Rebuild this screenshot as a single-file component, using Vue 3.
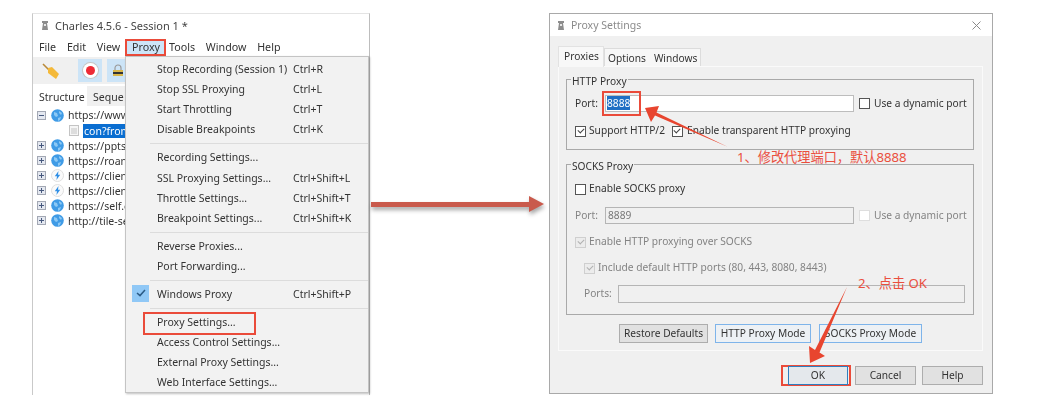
<script setup>
const menuBar = ["File", "Edit", "View", "Proxy", "Tools", "Window", "Help"];

const menuGroups = [
  [
    { label: "Stop Recording (Session 1)", key: "Ctrl+R" },
    { label: "Stop SSL Proxying", key: "Ctrl+L" },
    { label: "Start Throttling", key: "Ctrl+T" },
    { label: "Disable Breakpoints", key: "Ctrl+K" },
  ],
  [
    { label: "Recording Settings..." },
    { label: "SSL Proxying Settings...", key: "Ctrl+Shift+L" },
    { label: "Throttle Settings...", key: "Ctrl+Shift+T" },
    { label: "Breakpoint Settings...", key: "Ctrl+Shift+K" },
  ],
  [{ label: "Reverse Proxies..." }, { label: "Port Forwarding..." }],
  [{ label: "Windows Proxy", key: "Ctrl+Shift+P", checked: true }],
  [
    { label: "Proxy Settings...", marked: true },
    { label: "Access Control Settings..." },
    { label: "External Proxy Settings..." },
    { label: "Web Interface Settings..." },
  ],
];

const hosts = [
  { name: "https://www", icon: "globe", open: true },
  { name: "con?from", icon: "doc", child: true },
  { name: "https://ppts", icon: "globe" },
  { name: "https://roan", icon: "globe" },
  { name: "https://clien", icon: "bolt" },
  { name: "https://clien", icon: "bolt" },
  { name: "https://self.e", icon: "globe" },
  { name: "http://tile-se", icon: "globe" },
];
</script>

<template>
  <main class="page">
    <section class="charles">
      <header class="title">
        <svg class="jar" width="6" height="9" viewBox="0 0 6 9">
          <path d="M0 0h6v2H5l1 7H0l1-7H0z" fill="#8d8d8d" />
          <path d="M2 3h2v2H2z" fill="#e6e6e6" />
        </svg>
        <span>Charles 4.5.6 - Session 1 *</span>
      </header>
      <nav class="menubar">
        <span v-for="m in menuBar" :key="m" class="menubar-item" :class="{ active: m === 'Proxy' }">{{ m }}</span>
      </nav>
      <div class="toolbar">
        <svg class="broom" width="18" height="18" viewBox="0 0 18 18">
          <path d="M1 2l6 6" stroke="#b98a3a" stroke-width="1.6" />
          <path d="M6 6l4-1 7 7-3 5-8-6z" fill="#f4b93a" />
        </svg>
        <span class="tool tool-rec"><i class="rec-dot"></i></span>
        <span class="tool tool-lock">
          <svg width="12" height="13" viewBox="0 0 12 13">
            <path d="M3 6V4a3 3 0 0 1 6 0v2" fill="none" stroke="#9a9a9a" stroke-width="1.2" />
            <rect x="1" y="6" width="10" height="6" fill="#d9b64a" />
            <rect x="1" y="8" width="10" height="2" fill="#333" />
          </svg>
        </span>
      </div>
      <div class="tree">
        <div class="tree-tabs">
          <span class="tree-tab current">Structure</span>
          <span class="tree-tab">Seque</span>
        </div>
        <ul class="hosts">
          <li v-for="(h, i) in hosts" :key="i" class="host" :class="{ child: h.child }">
            <svg v-if="!h.child" class="expander" width="9" height="9" viewBox="0 0 9 9">
              <rect x="0.5" y="0.5" width="8" height="8" fill="#e4e8f0" stroke="#a3a8b4" />
              <path d="M2 4.5h5" stroke="#47597e" />
              <path v-if="!h.open" d="M4.5 2v5" stroke="#47597e" />
            </svg>
            <svg v-if="h.icon === 'globe'" width="13" height="13" viewBox="0 0 13 13">
              <circle cx="6.5" cy="6.5" r="6.3" fill="#3f9be6" />
              <path d="M3 3l3 1 1 3-2 1-2-2zM8 2l3 2-1 2-2-2zM7 9l3-1-1 3-2 1z" fill="#8cc8f4" />
            </svg>
            <svg v-else-if="h.icon === 'bolt'" width="13" height="13" viewBox="0 0 13 13">
              <circle cx="6.5" cy="6.5" r="6" fill="#fafafa" stroke="#dfdfdf" />
              <path d="M7.5 2L3.8 7.2h2.2L5.4 11 9.2 5.8H7z" fill="#2f8fe6" />
            </svg>
            <svg v-else width="10" height="11" viewBox="0 0 10 11">
              <rect x="0.5" y="0.5" width="9" height="10" fill="#f6f6f6" stroke="#c4c4c4" />
              <path d="M2 4h6M2 6h6M2 8h6" stroke="#c4c4c4" />
            </svg>
            <span class="host-name">{{ h.name }}</span>
          </li>
        </ul>
      </div>

      <div class="menu">
        <template v-for="(group, g) in menuGroups" :key="g">
          <div v-if="g" class="sep"></div>
          <div v-for="item in group" :key="item.label" class="item">
            <span v-if="item.checked" class="check">
              <svg width="10" height="8" viewBox="0 0 10 8"><path d="M1 4l3 2.6L9 1" fill="none" stroke="#2b5b86" stroke-width="1.5" /></svg>
            </span>
            <span class="item-label" :class="{ marked: item.marked }">{{ item.label }}</span>
            <span v-if="item.key" class="item-key">{{ item.key }}</span>
          </div>
        </template>
      </div>
    </section>

    <div class="link-arrow">
      <span class="link-line"></span>
      <span class="link-head"></span>
    </div>

    <section class="dialog">
      <header class="dialog-title">
        <svg class="jar" width="6" height="9" viewBox="0 0 6 9">
          <path d="M0 0h6v2H5l1 7H0l1-7H0z" fill="#8d8d8d" />
          <path d="M2 3h2v2H2z" fill="#e6e6e6" />
        </svg>
        <span>Proxy Settings</span>
        <svg class="close" width="9" height="9" viewBox="0 0 9 9"><path d="M.5.5l8 8M8.5.5l-8 8" stroke="#8a8a8a" /></svg>
      </header>
      <div class="dialog-body">
        <div class="tabs">
          <span class="tab current">Proxies</span>
          <span class="tab-rest"><span>Options</span><span>Windows</span></span>
        </div>
        <div class="panel">
          <div class="group">
            <span class="legend">HTTP Proxy</span>
            <div class="row">
              <label class="port-label">Port:</label>
              <div class="input port-input"><span class="selected">8888</span><b class="port-mark"></b></div>
              <i class="box dynamic"></i>
              <span>Use a dynamic port</span>
            </div>
            <div class="row second">
              <i class="box on"></i>
              <span>Support HTTP/2</span>
              <i class="box on next"></i>
              <span>Enable transparent HTTP proxying</span>
            </div>
          </div>

          <div class="group socks">
            <span class="legend">SOCKS Proxy</span>
            <div class="row">
              <i class="box"></i>
              <span>Enable SOCKS proxy</span>
            </div>
            <div class="row off gap">
              <label class="port-label">Port:</label>
              <div class="input disabled">8889</div>
              <i class="box dynamic blank"></i>
              <span>Use a dynamic port</span>
            </div>
            <div class="row off gap">
              <i class="box on faded"></i>
              <span>Enable HTTP proxying over SOCKS</span>
            </div>
            <div class="row off gap indent">
              <i class="box on faded"></i>
              <span>Include default HTTP ports (80, 443, 8080, 8443)</span>
            </div>
            <div class="row off gap indent last">
              <label class="ports-label">Ports:</label>
              <div class="input disabled wide"></div>
            </div>
          </div>

          <div class="modes">
            <button class="btn">Restore Defaults</button>
            <button class="btn blue http">HTTP Proxy Mode</button>
            <button class="btn blue socks-mode">SOCKS Proxy Mode</button>
          </div>
        </div>
        <div class="footer">
          <span class="ok-mark"><button class="btn ok">OK</button></span>
          <button class="btn foot">Cancel</button>
          <button class="btn foot">Help</button>
        </div>
      </div>
    </section>

    <!-- red notes drawn over the screenshots -->
    <svg class="notes" width="1063" height="420" viewBox="0 0 1063 420">
      <polygon points="645,108 659,106 656.5,112.5 728,147 655,115.5 651,122" fill="#e8452f" />
      <polygon points="847,287 819.5,352.5 825,356 810,363 809,346 815,350" fill="#e8452f" />
    </svg>
    <span class="note note-one">1、修改代理端口，默认8888</span>
    <span class="note note-two">2、点击 OK</span>
  </main>
</template>

<style>
html,
body {
  margin: 0;
  background: #fff;
}
</style>

<style scoped>
.page {
  position: relative;
  display: flex;
  align-items: flex-start;
  width: 1063px;
  height: 420px;
  box-sizing: border-box;
  padding: 13px 0 0 32px;
  overflow: hidden;
  font-family: "Noto Sans", "Noto Sans CJK SC", sans-serif;
  font-size: 10.5px;
  color: #333;
}

/* left window */
.charles {
  position: relative;
  flex: none;
  width: 338px;
  height: 382px;
  box-sizing: border-box;
  border-left: 1px solid #c9c9c9;
  border-right: 1px solid #bdbdbd;
  border-top: 1px solid #e4e4e4;
  background: #fff;
  filter: blur(0.45px);
}
.title {
  display: flex;
  align-items: center;
  gap: 7px;
  height: 22px;
  padding-left: 9px;
  font-size: 11px;
  color: #444;
}
.jar {
  flex: none;
}
.menubar {
  display: flex;
  height: 20px;
  margin-top: 1px;
  align-items: center;
  padding-left: 6px;
  font-size: 10.7px;
}
.menubar-item {
  margin-right: 10.8px;
}
.menubar-item.active {
  margin: 0 3px 0 -6px;
  padding: 0 4px 0 5px;
  line-height: 13px;
  border: 2px solid #ea4b3a;
  background: #cde5f8;
}
.toolbar {
  display: flex;
  align-items: center;
  height: 27px;
  background: #f0f0f0;
  padding-left: 9px;
}
.broom {
  margin-right: 18px;
}
.tool {
  display: flex;
  align-items: center;
  justify-content: center;
  height: 23px;
  background: #cce4f7;
}
.tool-rec {
  width: 24px;
  margin-right: 5px;
}
.tool-lock {
  width: 22px;
}
.rec-dot {
  width: 9px;
  height: 9px;
  border-radius: 50%;
  background: #ee2b35;
  box-shadow: 0 0 0 3px #fff, 0 0 0 4px #c6c6c6;
}
.tree {
  height: 310px;
  margin-top: 2px;
  overflow: hidden;
}
.tree-tabs {
  display: flex;
  height: 20px;
  background: #f0f0f0;
}
.tree-tab {
  padding: 4px 3px 0 6px;
}
.tree-tab.current {
  width: 45px;
  background: #fff;
}
.hosts {
  list-style: none;
  margin: 0;
  padding: 1px 0 0 4px;
}
.host {
  display: flex;
  align-items: center;
  gap: 5px;
  height: 15px;
  white-space: nowrap;
}
.host.child {
  padding-left: 32px;
}
.host.child .host-name {
  background: #0a6ed1;
  color: #fff;
  padding: 0 0 0 1px;
}
.host:first-child {
  height: 16px;
}
.host-name {
  margin-left: -1px;
}

.menu {
  position: absolute;
  left: 92px;
  top: 42px;
  width: 244px;
  height: 337px;
  box-sizing: border-box;
  padding-top: 2px;
  background: #f2f2f2;
  border: 1px solid #c4c4c4;
  box-shadow: 1px 1px 2px rgba(0, 0, 0, 0.25);
}
.item {
  position: relative;
  display: flex;
  align-items: center;
  height: 20.1px;
  padding-left: 31px;
  white-space: nowrap;
}
.item-label {
  width: 136px;
}
.marked {
  position: relative;
  z-index: 0;
}
.marked::before {
  content: "";
  position: absolute;
  left: -14px;
  top: -3px;
  width: 113px;
  height: 23px;
  box-sizing: border-box;
  border: 2px solid #ea4b3a;
}
.check {
  position: absolute;
  left: 6px;
  top: 1px;
  display: flex;
  align-items: center;
  justify-content: center;
  width: 17px;
  height: 17px;
  background: #90c8f6;
}
.sep {
  height: 1px;
  margin: 4px 0 3px 24px;
  background: #dcdcdc;
}

/* arrow between the two windows */
.link-arrow {
  flex: none;
  display: flex;
  align-items: center;
  width: 173px;
  height: 16px;
  margin: 183px 5px 0 1px;
  filter: drop-shadow(1px 3px 2px rgba(0, 0, 0, 0.35));
}
.link-line {
  flex: 1;
  height: 5px;
  background: #c95a4c;
}
.link-head {
  width: 0;
  height: 0;
  border-left: 15px solid #c95a4c;
  border-top: 8px solid transparent;
  border-bottom: 8px solid transparent;
}

/* right window */
.dialog {
  flex: none;
  width: 444px;
  height: 381px;
  box-sizing: border-box;
  border: 1px solid #a9a9a9;
  background: #f0f0f0;
  font-size: 10.2px;
  filter: blur(0.45px);
}
.dialog-title {
  display: flex;
  align-items: center;
  gap: 7px;
  height: 22px;
  padding: 0 11px 0 8px;
  background: #fff;
  font-size: 10.5px;
  color: #8b8b8b;
}
.close {
  margin-left: auto;
}
.dialog-body {
  padding: 10px 9px 0 8px;
}
.tabs {
  display: flex;
  align-items: flex-end;
  height: 20px;
}
.tab {
  width: 46px;
  height: 21px;
  margin-bottom: -1px;
  position: relative;
  z-index: 1;
  box-sizing: border-box;
  padding: 2px 0 0 5px;
  border: 1px solid #e2e2e2;
  border-bottom: 0;
  background: #f8f8f8;
}
.tab-rest {
  display: flex;
  gap: 8px;
  height: 18px;
  box-sizing: border-box;
  padding: 2px 3px 0 3px;
  background: #f7f7f7;
  border: 1px solid #dcdcdc;
  border-bottom: 0;
}
.panel {
  box-sizing: border-box;
  height: 285px;
  padding: 12px 8px 0 7px;
  border: 1px solid #fafafa;
  background: #f0f0f0;
}
.group {
  position: relative;
  box-sizing: border-box;
  height: 71px;
  padding: 15px 7px 0 8px;
  border: 1px solid #a9a9a9;
}
.group.socks {
  height: 151px;
  margin-top: 14px;
  padding-top: 16px;
}
.legend {
  position: absolute;
  left: 4px;
  top: -6px;
  padding: 0 1px;
  line-height: 14px;
  background: #f0f0f0;
}
.row {
  display: flex;
  align-items: center;
  min-height: 16px;
  white-space: nowrap;
}
.row > span,
.row > label {
  margin-bottom: 2px;
}
.row.second {
  margin-top: 11px;
}
.row.gap {
  margin-top: 10px;
}
.row.off {
  color: #838383;
}
.row.indent {
  padding-left: 9px;
}
.row.last {
  margin-top: 9px;
}
.port-label {
  flex: none;
  width: 30px;
}
.ports-label {
  flex: none;
  width: 34px;
}
.input {
  flex: none;
  box-sizing: border-box;
  width: 249px;
  height: 17px;
  padding-left: 2px;
  line-height: 14px;
  border: 1px solid #c8c8c8;
  background: #fff;
}
.input.disabled {
  background: #f0f0f0;
  border-color: #b5b5b5;
  color: #777;
}
.input.wide {
  width: 347px;
  height: 18px;
}
.port-input {
  position: relative;
  border-color: #bdbdbd;
  padding-left: 1px;
}
.selected {
  display: inline-block;
  background: #1f6fc4;
  color: #fff;
}
.port-mark {
  position: absolute;
  left: -4px;
  top: -5px;
  width: 39px;
  height: 25px;
  box-sizing: border-box;
  border: 2px solid #ea4b3a;
}
.box {
  position: relative;
  flex: none;
  box-sizing: border-box;
  width: 11px;
  height: 11px;
  margin-right: 3px;
  border: 1px solid #555;
  background: #fff;
}
.box.on::after {
  content: "";
  position: absolute;
  left: 1.5px;
  top: 1px;
  width: 5px;
  height: 3px;
  border-left: 1px solid #444;
  border-bottom: 1px solid #444;
  transform: rotate(-45deg);
}
.box.faded {
  border-color: #cfcfcf;
  background: #ececec;
}
.box.faded::after {
  border-color: #b0b0b0;
}
.box.blank {
  border-color: #dedede;
}
.box.next {
  margin-left: 7px;
  margin-right: 4px;
}
.box.dynamic {
  margin-left: 5px;
  margin-right: 4px;
}
.modes {
  display: flex;
  margin: 9px 0 0 53px;
}
.btn {
  box-sizing: border-box;
  height: 19px;
  padding: 0 0 1px;
  font: inherit;
  color: #333;
  background: #e1e1e1;
  border: 1px solid #adadad;
}
.modes .btn {
  width: 89px;
}
.modes .btn.http {
  width: 96px;
  margin-left: 7px;
}
.modes .btn.socks-mode {
  width: 103px;
  margin-left: 8px;
}
.btn.blue {
  background: #edf1f5;
  border-color: #7eb4ea;
}
.footer {
  display: flex;
  justify-content: flex-end;
  align-items: center;
  margin-top: 14px;
}
.btn.foot {
  width: 61px;
  margin-left: 6px;
}
.ok-mark {
  display: flex;
  border: 2px solid #ea4b3a;
  margin-right: -2px;
}
.btn.ok {
  width: 60px;
  margin: -1px 1px -1px 5px;
  background: #e4e8ec;
  border: 1.5px solid #2f7fc0;
}

/* annotations */
.notes {
  position: absolute;
  left: 0;
  top: 0;
  pointer-events: none;
}
.note {
  position: absolute;
  font-size: 13.2px;
  line-height: 18px;
  color: #ea4f3e;
  white-space: nowrap;
}
.note-one {
  left: 737px;
  top: 148px;
}
.note-two {
  left: 858px;
  top: 274px;
}
</style>
